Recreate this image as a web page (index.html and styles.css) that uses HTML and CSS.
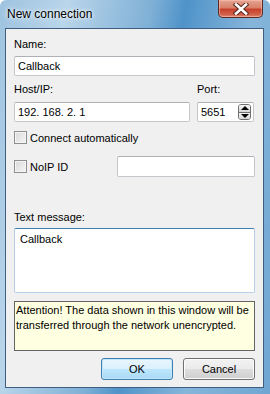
FILE: index.html
```html
<!DOCTYPE html>
<html lang="en">
<head>
    <meta charset="UTF-8">
    <title>New connection</title>
    <link rel="stylesheet" href="styles.css">
</head>
<body>
    <div class="window">
        <div class="titlebar">
            <div class="title">New connection</div>
            <div class="close">
                <svg width="16" height="12" viewBox="0 0 16 12">
                    <path d="M3 1.5 L13 10.5 M13 1.5 L3 10.5" stroke="#5a2a20" stroke-width="4.6" stroke-linecap="square"/>
                    <path d="M3 1.5 L13 10.5 M13 1.5 L3 10.5" stroke="#fff" stroke-width="2.6" stroke-linecap="square"/>
                </svg>
            </div>
        </div>
        <div class="client">
            <div class="label first">Name:</div>
            <div class="edit">Callback</div>

            <div class="host-row">
                <div class="host-col">
                    <div class="label">Host/IP:</div>
                    <div class="edit">192. 168. 2. 1</div>
                </div>
                <div class="port-col">
                    <div class="label">Port:</div>
                    <div class="edit port">
                        <span>5651</span>
                        <div class="spin">
                            <div class="spin-btn"><div class="arrow up"></div></div>
                            <div class="spin-btn"><div class="arrow down"></div></div>
                        </div>
                    </div>
                </div>
            </div>

            <div class="check-row auto">
                <div class="checkbox"></div>
                <span>Connect automatically</span>
            </div>

            <div class="check-row noip">
                <div class="checkbox"></div>
                <span class="noip-label">NoIP ID</span>
                <div class="edit noip-edit"></div>
            </div>

            <div class="label message-label">Text message:</div>
            <div class="memo">Callback</div>

            <div class="notice">Attention! The data shown in this window will be transferred through the network unencrypted.</div>

            <div class="buttons">
                <div class="button default">OK</div>
                <div class="button">Cancel</div>
            </div>
        </div>
    </div>
</body>
</html>
```

FILE: styles.css
```css
body {
    margin: 0;
    background: #ffffff;
    font-family: 'Liberation Sans', Arial, sans-serif;
    font-size: 11px;
    color: #000;
}
.window {
    width: 270px;
    height: 394px;
    background: linear-gradient(100deg, #9ec3e0 0%, #b9d5ea 20%, #7fb0d6 45%, #4f93c9 55%, #86b5da 75%, #6fa6d2 100%);
    border-radius: 6px 6px 0 0;
    box-sizing: border-box;
    overflow: hidden;
}
.titlebar {
    height: 28px;
    display: flex;
    align-items: flex-start;
}
.title {
    padding: 7px 0 0 7px;
    font-size: 12px;
    color: #000;
    text-shadow: 0 0 6px rgba(255, 255, 255, 0.9), 0 0 3px rgba(255, 255, 255, 0.9);
}
.close {
    margin-left: auto;
    margin-right: 7px;
    width: 45px;
    height: 18px;
    box-sizing: border-box;
    border: 1px solid #5a2a24;
    border-top: none;
    border-radius: 0 0 5px 5px;
    background: linear-gradient(#e5a593 0%, #d8806a 45%, #c7402c 55%, #d0604a 85%, #e08a70 100%);
    box-shadow: inset 0 0 0 1px rgba(255, 200, 190, 0.5);
    display: flex;
    align-items: center;
    justify-content: center;
}
.client {
    margin: 0 6px 0 5px;
    height: 360px;
    box-sizing: border-box;
    border: 1px solid #3e5f80;
    background: #f0f0f0;
    padding: 0 8px;
}
.label {
    height: 15px;
    line-height: 15px;
    margin-top: 6px;
    margin-bottom: 5px;
}
.label.first {
    margin-top: 8px;
    margin-bottom: 4px;
}
.edit {
    height: 20px;
    box-sizing: border-box;
    border: 1px solid #c4c6cc;
    border-top-color: #aeb0b6;
    border-radius: 2px;
    background: #fff;
    line-height: 18px;
    padding-left: 3px;
}
.host-row {
    display: flex;
    gap: 7px;
}
.host-col {
    width: 176px;
}
.port-col {
    width: 57px;
}
.port {
    display: flex;
    align-items: center;
    justify-content: space-between;
    padding-right: 2px;
}
.spin {
    width: 13px;
    height: 16px;
    display: flex;
    flex-direction: column;
    border: 1px solid #6f6f6f;
    border-radius: 3px;
    box-sizing: border-box;
    overflow: hidden;
}
.spin-btn {
    flex: 1;
    display: flex;
    align-items: center;
    justify-content: center;
    background: linear-gradient(#f4f4f4, #d6d6d6);
}
.spin-btn + .spin-btn {
    border-top: 1px solid #6f6f6f;
}
.arrow {
    width: 0;
    height: 0;
    border-left: 4px solid transparent;
    border-right: 4px solid transparent;
}
.arrow.up {
    border-bottom: 4px solid #000;
}
.arrow.down {
    border-top: 4px solid #000;
}
.check-row {
    display: flex;
    align-items: center;
}
.check-row.auto {
    margin-top: 9px;
    height: 13px;
}
.check-row.noip {
    margin-top: 12px;
    height: 21px;
}
.checkbox {
    width: 13px;
    height: 13px;
    box-sizing: border-box;
    border: 1px solid #8e8f8f;
    background: linear-gradient(135deg, #d8d8d8, #f6f6f6);
    box-shadow: inset 0 0 0 1px #f4f4f4;
    margin-right: 3px;
}
.noip-label {
    width: 87px;
}
.noip-edit {
    flex: 1;
    height: 21px;
}
.message-label {
    margin-top: 33px;
    margin-bottom: 3px;
}
.memo {
    height: 65px;
    box-sizing: border-box;
    border: 1px solid #b5cfe7;
    border-top-color: #3c7fb1;
    border-radius: 2px;
    background: #fff;
    padding: 3px 5px;
    line-height: 15px;
}
.notice {
    margin-top: 8px;
    height: 50px;
    box-sizing: border-box;
    border: 1px solid #646464;
    background: #ffffe1;
    padding: 1px 0 0 1px;
    line-height: 15px;
}
.buttons {
    margin-top: 7px;
    display: flex;
    justify-content: flex-end;
    gap: 10px;
}
.button {
    width: 72px;
    height: 22px;
    box-sizing: border-box;
    border: 1px solid #707070;
    border-radius: 3px;
    background: linear-gradient(#f2f2f2 0%, #ebebeb 50%, #dddddd 51%, #cfcfcf 100%);
    box-shadow: inset 0 0 0 1px #fcfcfc;
    text-align: center;
    line-height: 20px;
}
.button.default {
    border-color: #3c7fb1;
    background: linear-gradient(#eaf6fd 0%, #d9f0fc 50%, #bee6fd 51%, #a7d9f5 100%);
    box-shadow: inset 0 0 0 1px #c5e6f8;
}
```
